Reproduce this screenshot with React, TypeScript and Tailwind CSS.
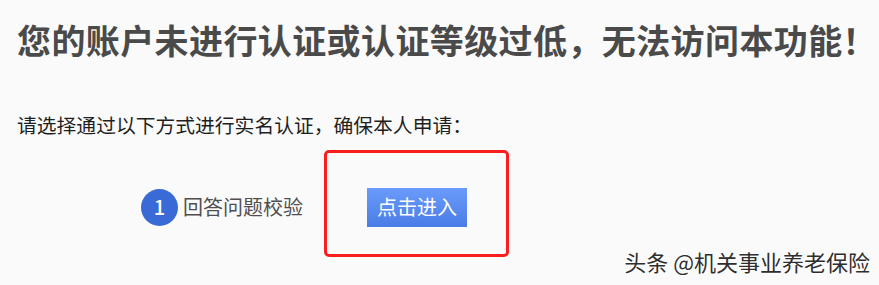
export default function App() {
  return (
    <div
      className="relative w-[879px] h-[285px] overflow-hidden bg-[#fafafa]"
      style={{ fontFamily: '"Noto Sans CJK SC", "Noto Sans", sans-serif' }}
    >
      <div className="flex flex-col pl-[17px] pt-[15px]">
        <h1 className="h-[50px] leading-[50px] text-[34px] font-bold text-[#4a4a4a] whitespace-nowrap tracking-[0.4px]">
          您的账户未进行认证或认证等级过低，无法访问本功能！
        </h1>
        <p className="mt-[45px] h-[30px] leading-[30px] text-[19.8px] text-[#1f1f1f] whitespace-nowrap">
          请选择通过以下方式进行实名认证，确保本人申请：
        </p>
        <div className="mt-[48px] flex items-center h-[38px]">
          <div className="ml-[124px] w-[37px] h-[37px] rounded-full bg-[#3a6ad6] flex items-center justify-center text-white text-[20px] font-medium">
            1
          </div>
          <span className="ml-[5px] text-[20px] text-[#4f4f4f] whitespace-nowrap">回答问题校验</span>
          <button className="ml-[64px] w-[100px] h-[39px] bg-gradient-to-b from-[#6a9bfb] to-[#4a7ce6] text-white text-[20px] flex items-center justify-center">
            点击进入
          </button>
        </div>
      </div>

      <div className="absolute left-[324px] top-[150px] w-[185px] h-[107px] border-[3px] border-[#fa1e1e] rounded-[5px]" />

      <div
        className="absolute right-[9px] top-[247px] text-[22px] leading-[28px] text-[#2e2e2e] whitespace-nowrap"
        style={{ textShadow: '1px 1px 0 #fff, -1px -1px 0 #fff' }}
      >
        头条 @机关事业养老保险
      </div>
    </div>
  )
}
